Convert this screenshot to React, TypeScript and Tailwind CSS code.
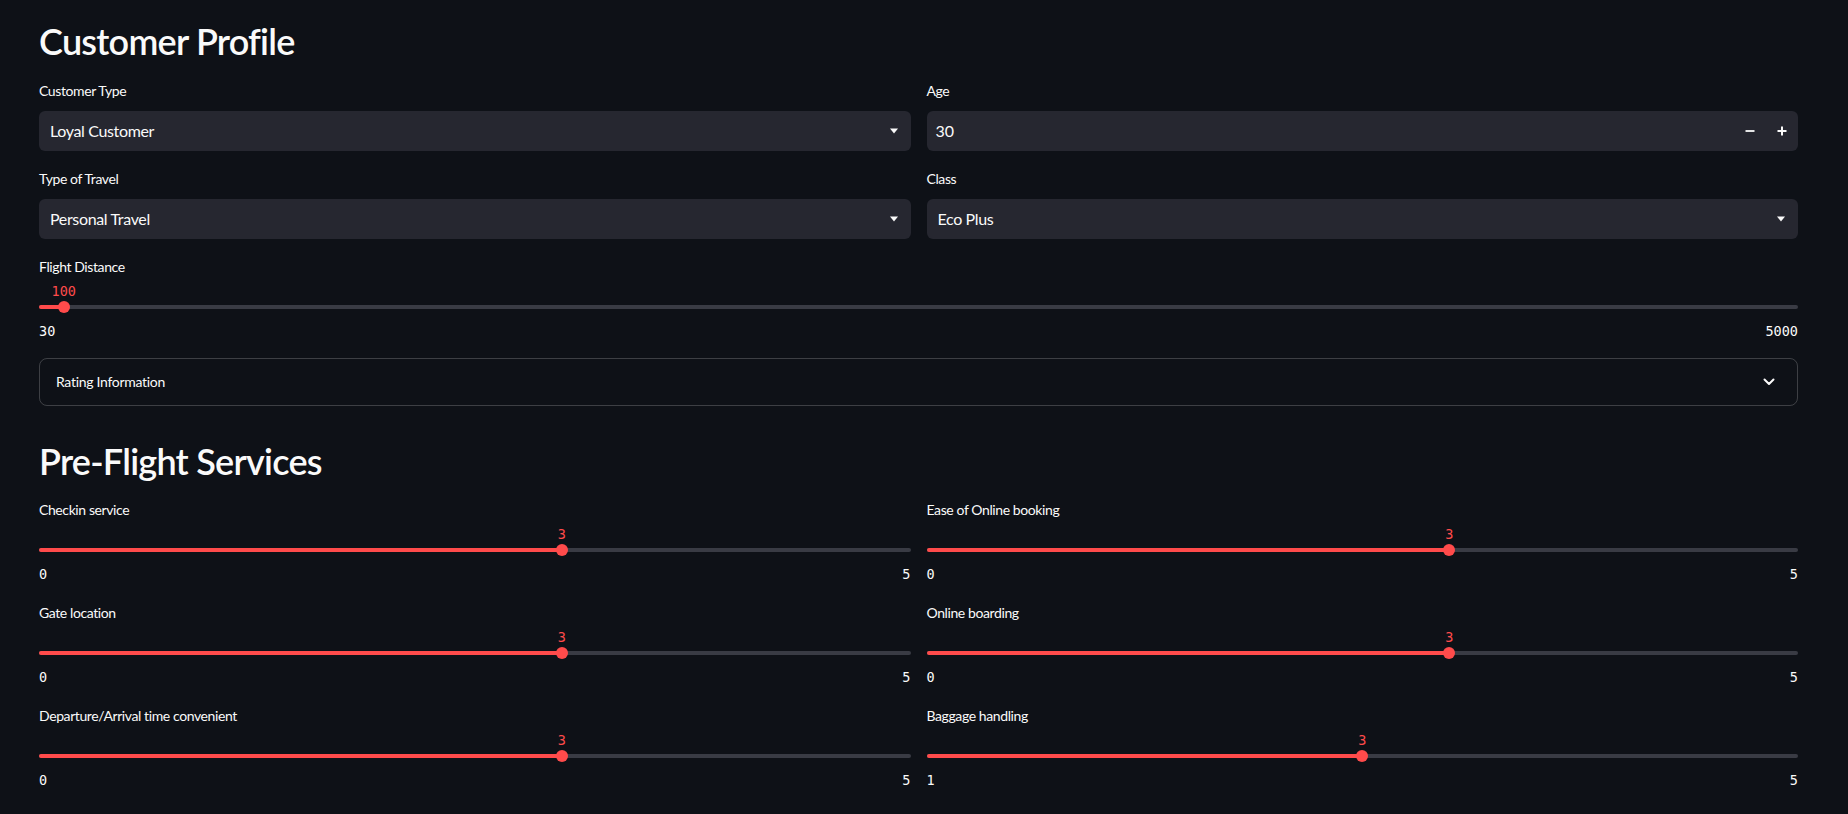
import React from 'react';

type SliderProps = {
  label: string;
  value: number;
  min: number;
  max: number;
};

const Caret = () => (
  <svg width="10" height="6" viewBox="0 0 10 6" className="text-[#fafafa]">
    <path d="M1 0.5 H9 L5 5.5 Z" fill="currentColor" />
  </svg>
);

const SelectBox = ({ label, value }: { label: string; value: string }) => (
  <div className="flex flex-col">
    <div className="h-6 mb-2 flex items-center text-sm tracking-[-0.4px] text-[#fafafa]">{label}</div>
    <div className="h-10 rounded-md bg-[#262730] flex items-center justify-between pl-[11px] pr-[12px]">
      <span className="text-base tracking-[-0.35px] text-[#fafafa]">{value}</span>
      <Caret />
    </div>
  </div>
);

const NumberBox = ({ label, value }: { label: string; value: number }) => (
  <div className="flex flex-col">
    <div className="h-6 mb-2 flex items-center text-sm tracking-[-0.4px] text-[#fafafa]">{label}</div>
    <div className="h-10 rounded-md bg-[#262730] flex items-center">
      <span className="flex-1 pl-[9px] text-base text-[#fafafa]">{value}</span>
      <div className="w-8 h-10 flex items-center justify-center">
        <svg width="10" height="10" viewBox="0 0 10 10">
          <path d="M0.5 5 H9.5" stroke="#fafafa" strokeWidth="1.8" />
        </svg>
      </div>
      <div className="w-8 h-10 flex items-center justify-center">
        <svg width="10" height="10" viewBox="0 0 10 10">
          <path d="M0.5 5 H9.5 M5 0.5 V9.5" stroke="#fafafa" strokeWidth="2" />
        </svg>
      </div>
    </div>
  </div>
);

const Slider = ({ label, value, min, max }: SliderProps) => {
  const pct = ((value - min) / (max - min)) * 100;
  return (
    <div className="flex flex-col">
      <div className="h-6 flex items-center text-sm tracking-[-0.4px] text-[#fafafa]">{label}</div>
      <div className="relative h-[42px]">
        <div className="absolute left-0 right-0 top-[26px] h-1 rounded-full bg-[#393b44]" />
        <div className="absolute left-0 top-[26px] h-1 rounded-full bg-[#ff4b4b]" style={{ width: `${pct}%` }} />
        <div
          className="absolute top-[22px] w-3 h-3 -ml-1.5 rounded-full bg-[#ff4b4b]"
          style={{ left: `${pct}%` }}
        />
        <div
          className="absolute top-[2px] -translate-x-1/2 font-['DejaVu_Sans_Mono',monospace] text-[13.5px] leading-5 text-[#ff4b4b]"
          style={{ left: `${pct}%` }}
        >
          {value}
        </div>
      </div>
      <div className="h-[21px] flex items-center justify-between font-['DejaVu_Sans_Mono',monospace] text-[13.5px] text-[#fafafa]">
        <span>{min}</span>
        <span>{max}</span>
      </div>
    </div>
  );
};

const Heading = ({ children, className = '' }: { children: React.ReactNode; className?: string }) => (
  <h2 className={`h-[42px] flex items-center text-[36px] font-semibold text-[#fafafa] tracking-[-0.75px] ${className}`}>
    {children}
  </h2>
);

export default function App() {
  return (
    <div className="min-h-screen bg-[#0e1117] font-['Lato','Noto_Sans',sans-serif] text-[#fafafa]">
      <div className="pl-[39px] pr-[50px] pt-5 pb-8 flex flex-col gap-4">
        <Heading className="mb-px">Customer Profile</Heading>

        <div className="grid grid-cols-2 gap-4">
          <SelectBox label="Customer Type" value="Loyal Customer" />
          <NumberBox label="Age" value={30} />
        </div>

        <div className="grid grid-cols-2 gap-4">
          <SelectBox label="Type of Travel" value="Personal Travel" />
          <SelectBox label="Class" value="Eco Plus" />
        </div>

        <Slider label="Flight Distance" value={100} min={30} max={5000} />

        <div className="h-12 rounded-lg border border-[rgba(250,250,250,0.2)] flex items-center justify-between pl-4 pr-[22px]">
          <span className="text-sm tracking-[-0.3px] text-[#fafafa]">Rating Information</span>
          <svg width="12" height="8" viewBox="0 0 12 8">
            <path d="M1.5 1.5 L6 6 L10.5 1.5" fill="none" stroke="#fafafa" strokeWidth="2" strokeLinecap="round" strokeLinejoin="round" />
          </svg>
        </div>

        <Heading className="mt-[18px]">Pre-Flight Services</Heading>

        <div className="grid grid-cols-2 gap-x-4 gap-y-4">
          <Slider label="Checkin service" value={3} min={0} max={5} />
          <Slider label="Ease of Online booking" value={3} min={0} max={5} />
          <Slider label="Gate location" value={3} min={0} max={5} />
          <Slider label="Online boarding" value={3} min={0} max={5} />
          <Slider label="Departure/Arrival time convenient" value={3} min={0} max={5} />
          <Slider label="Baggage handling" value={3} min={1} max={5} />
        </div>
      </div>
    </div>
  );
}
